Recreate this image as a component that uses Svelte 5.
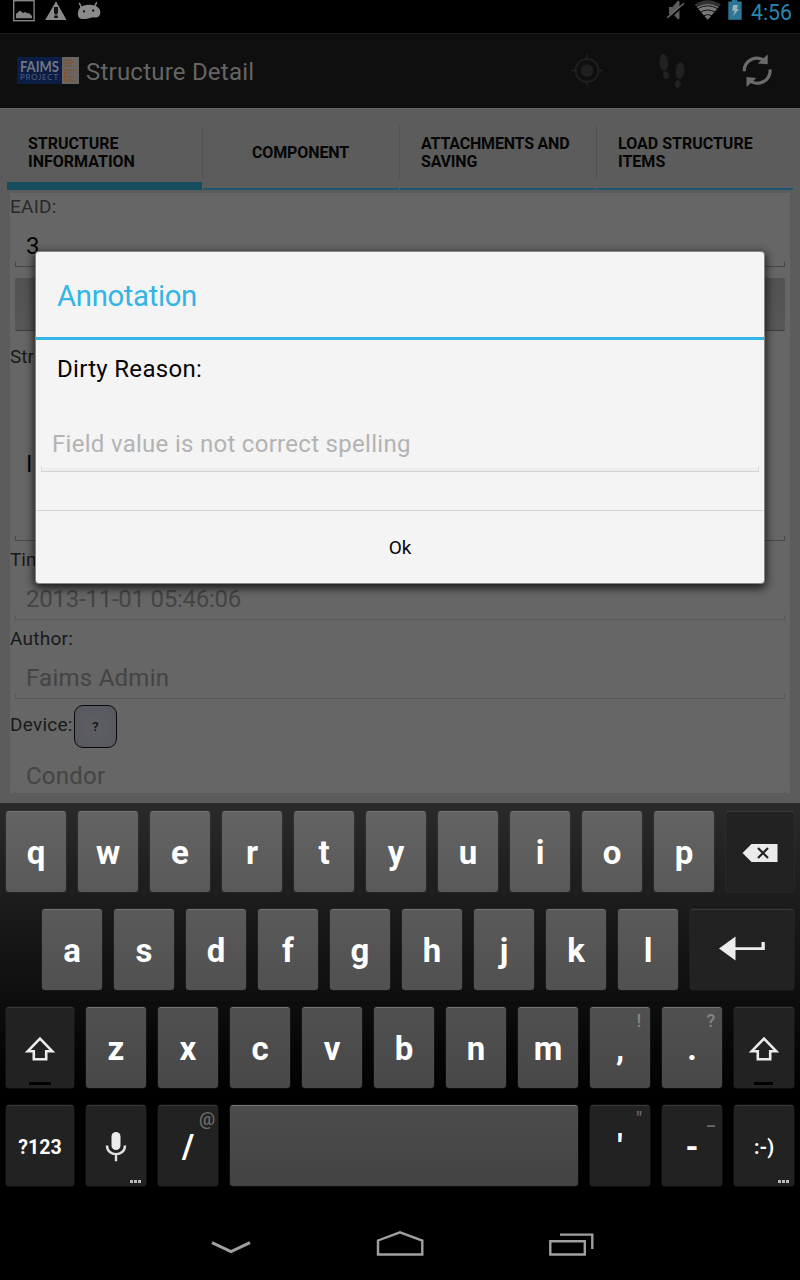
<script>
  const tabs = ['STRUCTURE INFORMATION', 'COMPONENT', 'ATTACHMENTS AND SAVING', 'LOAD STRUCTURE ITEMS'];
  const row1 = 'qwertyuiop'.split('');
  const row2 = 'asdfghjkl'.split('');
  const row3 = 'zxcvbnm'.split('');
</script>

{#snippet shift()}
  <svg width="32" height="26" viewBox="0 0 32 26">
    <path d="M16 2.6 L28.2 15.2 H22.2 V23.2 H9.8 V15.2 H3.8 Z" fill="none" stroke="#ececec" stroke-width="2.6" />
  </svg>
{/snippet}

<div class="screen">
  <header class="status">
    <div class="left">
      <svg width="22" height="22" viewBox="0 0 22 22">
        <rect x=".7" y=".7" width="20.4" height="20" fill="none" stroke="#858585" stroke-width="1.4" />
        <path d="M3 18.3V14l4-3.5 3 2.5 2-1 3 1.5 1-.6 3 3v2.4z" fill="#858585" />
      </svg>
      <svg width="22" height="22" viewBox="0 0 22 22">
        <path d="M11 1.2 21.6 20H.2Z" fill="#8a8a8a" />
        <path d="M9 7h4v5.6l-1 2H10l-1-2zM9.2 15.5h3.6V18H9.2z" fill="#111" />
      </svg>
      <svg width="24" height="22" viewBox="76 0 24 22">
        <path d="M77 15.5C76 8 81 4.7 87.500 4.700S99.500 7 99.300 12.500C99.200 17.500 95 18.200 91.500 17.200 88 18.500 84 19.500 80.500 18.900 78.500 18.500 77.300 17.500 77 15.500Z" fill="#8a8a8a" />
        <path d="M80 7 78.500 3.200M93.800 6.300 95.500 2.600" stroke="#8a8a8a" stroke-width="1.5" stroke-linecap="round" />
        <circle cx="83" cy="11.300" r="1.100" fill="#000" /><circle cx="92.200" cy="10.600" r="1.100" fill="#000" />
      </svg>
    </div>
    <div class="right">
      <svg width="19" height="22" viewBox="666 0 19 22">
        <path d="M669 7h3.500l5-6q2-1 2 1v16q0 2-2 1l-4-4.500H669z" fill="#5c5c5c" />
        <path d="M668 18.800 684.500 4" stroke="#000" stroke-width="2.400" />
        <path d="M667.300 17.800 684 3.200" stroke="#707070" stroke-width="1.400" />
      </svg>
      <svg class="wifi" width="28" height="22" viewBox="694 0 28 22">
        <path d="M707.700 19.800 694.500 4.500Q707.700-4 721 4.500Z" fill="#313131" />
        <path d="M707.700 19.800 697 7.300Q707.700 .5 718.500 7.300Z" fill="#777" />
        <path d="M697.500 8.800q10.200-6 20.400 0M700 12.300q7.700-4.500 15.400 0M703 16q4.700-2.800 9.400 0" fill="none" stroke="#111" stroke-width="1" />
      </svg>
      <svg class="battery" width="14" height="22" viewBox="728 0 14 22">
        <path d="M728.300 1.500h3.500V0h5.500v1.500h4.400V19.800h-13.400z" fill="#2b7795" />
        <path d="M733.200 5h4.800l-1.300 4h2.300l-5.800 7 1.600-5.300h-2.600z" fill="#9fb3bb" />
      </svg>
      <span class="clock">4:56</span>
    </div>
  </header>

  <div class="actionbar">
    <svg class="logo" width="62" height="28" viewBox="17 57 62 28">
      <rect x="17" y="57" width="45" height="27" fill="#0c1d45" />
      <rect x="62" y="57" width="17" height="27" fill="#686562" />
      <text x="20" y="72" textLength="39" lengthAdjust="spacingAndGlyphs" font-family="Lato" font-weight="700" font-size="16" fill="#707680">FAIMS</text>
      <text x="20" y="80" textLength="38" font-family="Lato" font-size="7.800" fill="#52607c">PROJECT</text>
      <path d="M63 60h8l1 1.500M63 63.300h10M64 66h7q3-3 0-6M77 70.300H64.500V81M65 73h5M65 76.500h6.500M66 81h10M72 77h3.500M67 79h5" fill="none" stroke="#80552b" stroke-width="1" />
    </svg>
    <h1>Structure Detail</h1>
    <div class="actions">
      <svg width="34" height="36" viewBox="570.500 53 34 36">
        <circle cx="587.500" cy="70.500" r="11.500" fill="none" stroke="#202020" stroke-width="1.800" />
        <circle cx="587.500" cy="70.500" r="6.300" fill="#202020" />
        <path d="M587.500 54.500v6M587.500 80.500v6M571.500 70.500h6M597.500 70.500h6" stroke="#202020" stroke-width="1.600" />
      </svg>
      <svg width="30" height="36" viewBox="658 53 30 36">
        <g fill="#212121">
          <ellipse cx="664.700" cy="62.500" rx="4.300" ry="8.500" transform="rotate(-5 664.700 62.500)" />
          <ellipse cx="667" cy="75.300" rx="2.900" ry="4" transform="rotate(-15 667 75.300)" />
          <ellipse cx="681" cy="70.800" rx="4.300" ry="8.500" transform="rotate(5 681 70.800)" />
          <ellipse cx="678.800" cy="84" rx="2.900" ry="4" transform="rotate(15 678.800 84)" />
        </g>
      </svg>
      <svg width="34" height="36" viewBox="740.500 53 34 36">
        <g fill="none" stroke="#6b6b6b" stroke-width="3.200">
          <path d="M744.800 71.300C744.500 59.500 757 55 765 60.800" />
          <path d="M770.700 69.500C771 81.500 758.500 86.500 750.500 80.800" />
        </g>
        <path d="M768.200 54.500v9.800l-10-.9zM747 87V77l10 1z" fill="#6b6b6b" />
      </svg>
    </div>
  </div>

  <main>
    <nav class="tabs">
      {#each tabs as tab, i}
        <div class="tab" class:active={i === 0}><span>{tab}</span></div>
      {/each}
    </nav>
    <section class="panel">
      <div class="label">EAID:</div>
      <div class="field dark first">3</div>
      <div class="greybtn"></div>
      <div class="label str">Str</div>
      <div class="field dark tall">I</div>
      <div class="label next cut">Tim</div>
      <div class="field date">2013-11-01 05:46:06</div>
      <div class="label next">Author:</div>
      <div class="field">Faims Admin</div>
      <div class="device"><div class="label">Device:</div><div class="help">?</div></div>
      <div class="field last">Condor</div>
    </section>
  </main>

  <div class="keyboard">
    <div class="row r1">
      {#each row1 as k}<div class="key">{k}</div>{/each}
      <div class="key fn wide">
        <svg width="36" height="20" viewBox="0 0 36 20">
          <path d="M.5 10 9.500 1H35.500V19H9.500Z" fill="#ebebeb" />
          <path d="M16 5 26 15M26 5 16 15" stroke="#222" stroke-width="2.200" />
        </svg>
      </div>
    </div>
    <div class="row r2">
      {#each row2 as k}<div class="key">{k}</div>{/each}
      <div class="key fn enter">
        <svg width="48" height="26" viewBox="0 0 48 26">
          <path d="M1 12.500 17.500 .5V24.500ZM17 11.200H43.500V6H46.800V14H17Z" fill="#ededed" />
        </svg>
      </div>
    </div>
    <div class="row r3">
      <div class="key fn wide">{@render shift()}<i class="bar"></i></div>
      {#each row3 as k}<div class="key">{k}</div>{/each}
      <div class="key">,<b class="hint">!</b></div>
      <div class="key">.<b class="hint">?</b></div>
      <div class="key fn">{@render shift()}<i class="bar small"></i></div>
    </div>
    <div class="row r4">
      <div class="key fn wide text">?123</div>
      <div class="key fn">
        <svg width="22" height="32" viewBox="0 0 22 32">
          <rect x="6.500" y="1" width="9" height="18" rx="4.500" fill="#ececec" />
          <path d="M2 14.500c0 11.500 18 11.500 18 0M11 23v7.200" fill="none" stroke="#e2e2e2" stroke-width="2.400" />
        </svg>
        <i class="dots"></i>
      </div>
      <div class="key fn">/<b class="hint">@</b></div>
      <div class="key space"></div>
      <div class="key fn">'<b class="hint">"</b></div>
      <div class="key fn">-<b class="hint">_</b></div>
      <div class="key fn text">:-)<i class="dots"></i></div>
    </div>
  </div>

  <footer>
    <svg width="42" height="30" viewBox="210 1230 42 30"><path d="M212 1242.700 231 1251.500 250 1242.700" fill="none" stroke="#a0a0a0" stroke-width="3" /></svg>
    <svg width="50" height="30" viewBox="375 1230 50 30"><path d="M378 1240.500 400 1232.300 422.300 1240.500V1254.500H378Z" fill="none" stroke="#a0a0a0" stroke-width="2.400" /></svg>
    <svg width="48" height="30" viewBox="548 1230 48 30"><path d="M550.300 1241.300H584.800V1254.500H550.300ZM560 1234.600H592.300V1249" fill="none" stroke="#a0a0a0" stroke-width="2.400" /></svg>
  </footer>

  <div class="dialog">
    <h2>Annotation</h2>
    <div class="body">
      <p>Dirty Reason:</p>
      <div class="input">Field value is not correct spelling</div>
    </div>
    <div class="ok">Ok</div>
  </div>
</div>

<style>
  :global(body) { margin: 0; background: #000; }
  .screen { position: relative; width: 800px; height: 1280px; overflow: hidden; background: #000; font-family: Roboto, sans-serif; display: flex; flex-direction: column; }
  .screen * { box-sizing: border-box; }
  svg { display: block; flex: none; }
  h1, h2, p { margin: 0; font-weight: 400; }

  .status { height: 33px; display: flex; justify-content: space-between; padding: 0 8px 0 13px; }
  .left, .right { display: flex; align-items: flex-start; }
  .left { gap: 10px; }
  .wifi { margin-left: 9px; }
  .battery { margin-left: 6px; }
  .clock { font-size: 21.300px; line-height: 25px; color: #2688b0; margin-left: 9px; }

  .actionbar { height: 75px; background: #0f0f0f; border-top: 1px solid #191919; display: flex; align-items: center; padding: 0 26px 0 17px; }
  .actionbar h1 { font-size: 24px; line-height: 28px; letter-spacing: .22px; color: #656565; margin: 2px 0 0 7px; }
  .actions { margin-left: auto; display: flex; gap: 53px; }

  main { height: 695px; background: #5c5c5c; border-top: 1px solid #666; display: flex; flex-direction: column; }
  .tabs { display: grid; grid-template-columns: 195px 197px 197px 197px; padding: 17px 7px 0; height: 81px; }
  .tab { display: flex; align-items: center; padding: 0 20px 11px 22px; font-size: 16px; line-height: 18px; font-weight: 700; color: #050505; background: linear-gradient(#515151, #515151) 0 0 / 1px 53px no-repeat, linear-gradient(#1d5770, #1d5770) 1px 100% / 100% 2px no-repeat; }
  .tab:nth-child(2) { justify-content: center; padding-left: 20px; letter-spacing: -.1px; }
  .tab:nth-child(3) { letter-spacing: -.2px; }
  .tab.active { border-bottom: 8px solid #154e60; padding: 0 20px 3px 21px; background: none; }
  .panel { margin: 3px 10px 0; height: 600px; background: #666; overflow: hidden; }
  .label { font-size: 19px; line-height: 27px; height: 27px; letter-spacing: .25px; color: #191919; white-space: nowrap; }
  .panel > .label:first-child { color: #292929; }
  .label.str { margin-top: 12px; letter-spacing: 0; }
  .label.cut { letter-spacing: 0; }
  .label.next { margin-top: 5px; }
  .field { height: 47px; margin: 0 5px; padding: 14px 11px 0; font-size: 24px; line-height: 24px; letter-spacing: .25px; color: #444;
    background: linear-gradient(#585858, #585858) 0 100% / 100% 1px no-repeat, linear-gradient(#585858, #585858) 0 100% / 1px 5px no-repeat, linear-gradient(#585858, #585858) 100% 100% / 1px 5px no-repeat; }
  .field.date { letter-spacing: -.24px; }
  .field.dark { color: #050505; background: linear-gradient(#484848, #484848) 0 100% / 100% 1px no-repeat, linear-gradient(#484848, #484848) 0 100% / 1px 5px no-repeat, linear-gradient(#484848, #484848) 100% 100% / 1px 5px no-repeat; }
  .field.first { padding-top: 14px; }
  .field.tall { height: 171px; padding-top: 82px; }
  .field.last { height: 48px; padding-top: 16px; }
  .greybtn { height: 53px; margin: 11px 5px 0; border-radius: 2px; background: linear-gradient(#525252, #575757); border-bottom: 1px solid #3e3e3e; }
  .device { display: flex; align-items: flex-start; padding-top: 6px; }
  .device .label { margin-top: 6px; width: 64px; }
  .help { width: 43px; height: 43px; border: 1.500px solid #0b0b0b; border-radius: 9px; background: radial-gradient(#5e5f64, #55585e); font-size: 13px; font-weight: 500; color: #111; display: flex; align-items: center; justify-content: center; }

  .keyboard { height: 402px; padding: 8px 6px 0; background: linear-gradient(#2a2a2a, #000 290px); display: flex; flex-direction: column; gap: 17px; }
  .row { display: flex; gap: 12px; height: 81px; }
  .r2 { padding-left: 36px; }
  .key { position: relative; width: 60px; height: 81px; flex: none; border-radius: 3px; border-top: 1px solid #747474; box-shadow: 0 0 0 .5px rgba(90, 90, 90, .3); color: #fff; font-size: 33px; font-weight: 700; display: flex; align-items: center; justify-content: center; padding-top: 1px; }
  .r1 .key { background: linear-gradient(#636363, #595959); }
  .r2 .key { background: linear-gradient(#5a5a5a, #505050); }
  .r3 .key { background: linear-gradient(#505050, #484848); }
  .r4 .key { background: linear-gradient(#4c4c4c, #434343); }
  .row .key.fn { background: #222; border-top-color: #383838; }
  .key.wide { width: 68px; }
  .key.enter { width: 104px; padding-bottom: 3px; }
  .key.space { width: 348px; }
  .key.text { font-size: 19.500px; padding-top: 2px; }
  .hint { position: absolute; top: 2px; right: -1px; width: 24px; text-align: center; font-size: 18px; line-height: 22px; font-weight: 500; color: #858585; }
  .r4 .hint { color: #6b6b6b; }
  .bar { position: absolute; bottom: 3px; left: 23px; width: 22px; height: 3px; background: #000; }
  .bar.small { left: 20px; width: 19px; }
  .dots { position: absolute; right: 5px; bottom: 3px; width: 11px; height: 3px; background: repeating-linear-gradient(90deg, #bbb 0 3px, transparent 3px 4px); }

  footer { flex: 1; display: grid; grid-template-columns: 42px 50px 48px; column-gap: 123px; padding: 25px 0 0 210px; }

  .dialog { position: absolute; left: 36px; top: 252px; width: 728px; height: 331px; border-radius: 3px; background: #f4f4f4; box-shadow: 0 0 0 1px #858585, 0 3px 10px 2px rgba(0, 0, 0, .75); display: flex; flex-direction: column; }
  h2 { height: 88px; border-bottom: 3px solid #33b5e5; color: #33b5e5; font-size: 29.330px; letter-spacing: -.35px; line-height: 88px; padding-left: 21px; }
  .body { height: 170px; }
  .dialog p { font-size: 24px; line-height: 28px; letter-spacing: .3px; padding: 15px 0 0 21px; color: #050505; }
  .input { margin: 46px 5px 0; height: 43px; padding: 1px 0 0 11px; font-size: 24px; line-height: 28px; letter-spacing: .29px; color: #b3b3b3;
    background: linear-gradient(#d3d3d3, #d3d3d3) 0 100% / 100% 1px no-repeat, linear-gradient(#d8d8d8, #d8d8d8) 0 100% / 1px 6px no-repeat, linear-gradient(#d8d8d8, #d8d8d8) 100% 100% / 1px 6px no-repeat, linear-gradient(#ededed, #ededed) 0 100% / 100% 4px no-repeat; }
  .ok { flex: 1; border-top: 1px solid #d5d5d5; display: flex; align-items: center; justify-content: center; padding-top: 1px; font-size: 19px; color: #050505; }
</style>
